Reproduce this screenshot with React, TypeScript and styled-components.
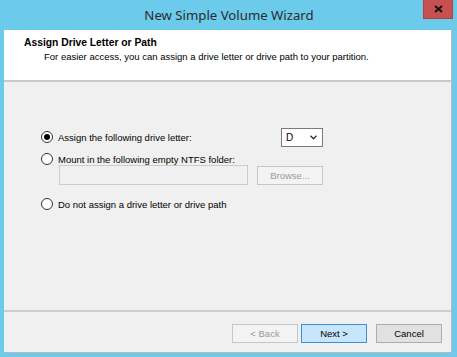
import React, { useState } from "react";
import styled, { createGlobalStyle } from "styled-components";

const GlobalStyle = createGlobalStyle`
  html, body {
    margin: 0;
    padding: 0;
    background: #6ccbea;
  }
  * {
    box-sizing: border-box;
  }
`;

const SWindow = styled.div`
  width: 457px;
  height: 357px;
  background: #6ccbea;
  display: flex;
  flex-direction: column;
  font-family: "Liberation Sans", Arial, sans-serif;
  font-size: 9.5px;
  color: #000;
`;

const STitleBar = styled.div`
  height: 30px;
  position: relative;
  display: flex;
  align-items: center;
  justify-content: center;
  padding-bottom: 1px;
`;

const STitle = styled.div`
  font-family: "Noto Sans", "Open Sans", sans-serif;
  font-size: 13.2px;
  color: #2b2b2b;
  margin-left: 1px;
`;

const SClose = styled.div`
  position: absolute;
  top: 0;
  right: 4px;
  width: 30px;
  height: 19px;
  background: #c75050;
  border: 1px solid #a94545;
  border-top: none;
  display: grid;
  place-items: center;
`;

const SClient = styled.div`
  flex: 1;
  margin: 0 5px 4px 4px;
  display: flex;
  flex-direction: column;
  background: #f0f0f0;
  border-right: 1px solid #b9b9b9;
  border-bottom: 1px solid #b9b9b9;
`;

const SHeader = styled.div`
  height: 52px;
  background: #fff;
  border-bottom: 2px solid #c9c9c9;
  padding: 6px 0 0 20px;
`;

const SHeading = styled.div`
  font-weight: 700;
  font-size: 10.3px;
  line-height: 13px;
`;

const SSubtitle = styled.div`
  margin: 2px 0 0 20px;
  line-height: 12px;
`;

const SContent = styled.div`
  flex: 1;
  padding: 45px 0 0 37px;
  border-bottom: 2px solid #cdcdcd;
`;

const SOptions = styled.div`
  width: 282px;
  display: flex;
  flex-direction: column;
`;

const SRow = styled.div<{ $height: number; $top?: number }>`
  height: ${({ $height }) => $height}px;
  margin-top: ${({ $top }) => $top || 0}px;
  display: flex;
  align-items: center;
  justify-content: space-between;
`;

const SRadioLabel = styled.label`
  display: flex;
  align-items: center;
  gap: 5px;
  cursor: default;
`;

const SRadio = styled.span<{ $checked: boolean }>`
  width: 12px;
  height: 12px;
  border-radius: 50%;
  border: 1px solid #333;
  background: #fff;
  display: grid;
  place-items: center;

  &::after {
    content: "";
    width: 6px;
    height: 6px;
    border-radius: 50%;
    background: ${({ $checked }) => ($checked ? "#000" : "transparent")};
  }
`;

const SSelect = styled.div`
  width: 42px;
  height: 19px;
  background: #fff;
  border: 1px solid #7a7a7a;
  display: flex;
  align-items: center;
  justify-content: space-between;
  padding: 0 5px 0 4px;
  font-size: 10px;
`;

const SFolderRow = styled.div`
  height: 20px;
  margin-left: 18px;
  display: flex;
  align-items: center;
  justify-content: space-between;
`;

const SInput = styled.div`
  width: 189px;
  height: 20px;
  background: #f0f0f0;
  border: 1px solid #cccccc;
`;

const SButton = styled.div<{ $variant?: "default" | "primary" | "disabled" }>`
  width: 66px;
  height: 19px;
  display: grid;
  place-items: center;
  font-size: 9.5px;
  border: 1px solid
    ${({ $variant }) =>
      $variant === "primary" ? "#3c8fd9" : $variant === "disabled" ? "#c6c6c6" : "#adadad"};
  background: ${({ $variant }) =>
    $variant === "primary" ? "#c7e5fb" : $variant === "disabled" ? "#f3f3f3" : "#e1e1e1"};
  color: ${({ $variant }) => ($variant === "disabled" ? "#9b9b9b" : "#000")};
`;

const SFooter = styled.div`
  height: 40px;
  display: flex;
  justify-content: flex-end;
  padding: 12px 9px 0 0;
  gap: 3px;
`;

const SCancel = styled(SButton)`
  margin-left: 6px;
`;

const options = [
  "Assign the following drive letter:",
  "Mount in the following empty NTFS folder:",
  "Do not assign a drive letter or drive path",
];

const App: React.FC = () => {
  const [selected, setSelected] = useState(0);

  return (
    <>
      <GlobalStyle />
      <SWindow>
        <STitleBar>
          <STitle>New Simple Volume Wizard</STitle>
          <SClose>
            <svg width="9" height="8" viewBox="0 0 9 8">
              <path d="M1 1 L8 7 M8 1 L1 7" stroke="#111" strokeWidth="2" />
            </svg>
          </SClose>
        </STitleBar>
        <SClient>
          <SHeader>
            <SHeading>Assign Drive Letter or Path</SHeading>
            <SSubtitle>
              For easier access, you can assign a drive letter or drive path to your partition.
            </SSubtitle>
          </SHeader>
          <SContent>
            <SOptions>
              <SRow $height={20}>
                <SRadioLabel onClick={() => setSelected(0)}>
                  <SRadio $checked={selected === 0} />
                  {options[0]}
                </SRadioLabel>
                <SSelect>
                  <span>D</span>
                  <svg width="7" height="5" viewBox="0 0 7 5">
                    <path d="M0.5 0.8 L3.5 3.8 L6.5 0.8" stroke="#333" strokeWidth="1.4" fill="none" />
                  </svg>
                </SSelect>
              </SRow>
              <SRow $height={12} $top={6}>
                <SRadioLabel onClick={() => setSelected(1)}>
                  <SRadio $checked={selected === 1} />
                  {options[1]}
                </SRadioLabel>
              </SRow>
              <SFolderRow>
                <SInput />
                <SButton $variant="disabled">Browse...</SButton>
              </SFolderRow>
              <SRow $height={12} $top={13}>
                <SRadioLabel onClick={() => setSelected(2)}>
                  <SRadio $checked={selected === 2} />
                  {options[2]}
                </SRadioLabel>
              </SRow>
            </SOptions>
          </SContent>
          <SFooter>
            <SButton $variant="disabled">&lt; Back</SButton>
            <SButton $variant="primary">Next &gt;</SButton>
            <SCancel>Cancel</SCancel>
          </SFooter>
        </SClient>
      </SWindow>
    </>
  );
};

export default App;
